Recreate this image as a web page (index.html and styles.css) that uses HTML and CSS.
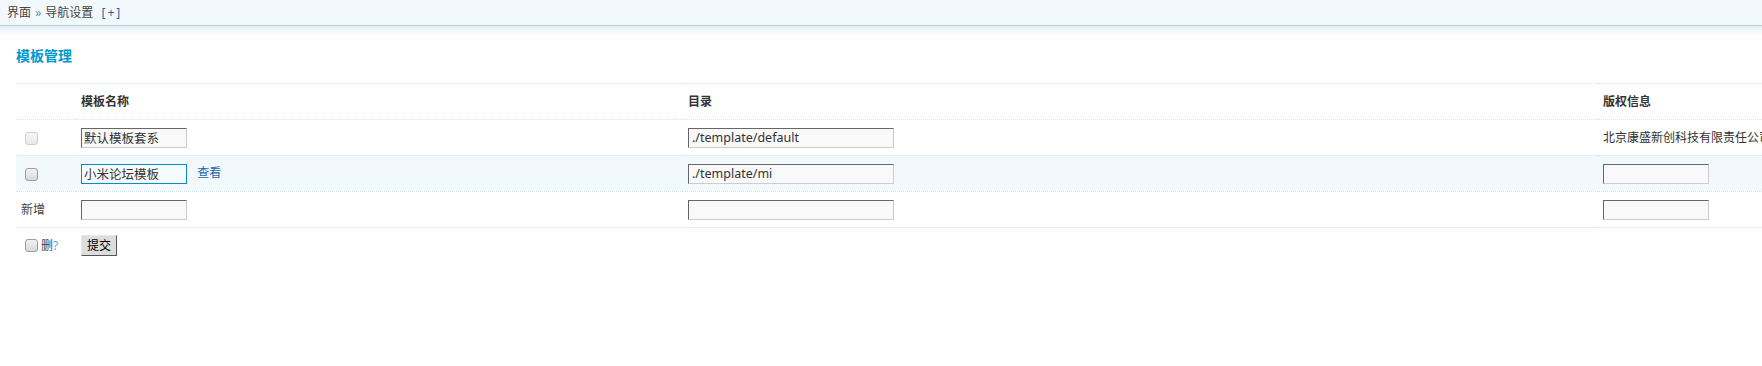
FILE: index.html
```html
<!DOCTYPE html>
<html>
<head>
<meta charset="utf-8">
<title>模板管理</title>
<link rel="stylesheet" href="styles.css">
</head>
<body>

<div id="navbar">
    界面 <span class="sep">&raquo;</span> 导航设置 <a class="addnav" href="#">[+]</a>
</div>
<div id="navshadow"></div>

<div id="main">
    <h3>模板管理</h3>

    <table class="tb">
        <colgroup>
            <col class="c-chk">
            <col class="c-name">
            <col class="c-dir">
            <col>
        </colgroup>
        <tr class="header">
            <td></td>
            <td>模板名称</td>
            <td>目录</td>
            <td>版权信息</td>
        </tr>
        <tr>
            <td><input type="checkbox" class="checkbox" disabled></td>
            <td><input type="text" class="txt" value="默认模板套系"></td>
            <td><input type="text" class="txt txt-dir" value="./template/default"></td>
            <td class="nowrap">北京康盛新创科技有限责任公司</td>
        </tr>
        <tr class="hover">
            <td><input type="checkbox" class="checkbox"></td>
            <td><input type="text" class="txt focus" value="小米论坛模板"> <a class="act" href="#">查看</a></td>
            <td><input type="text" class="txt txt-dir" value="./template/mi"></td>
            <td><input type="text" class="txt"></td>
        </tr>
        <tr>
            <td class="plain">新增</td>
            <td><input type="text" class="txt"></td>
            <td><input type="text" class="txt txt-dir"></td>
            <td><input type="text" class="txt"></td>
        </tr>
        <tr class="fixsel">
            <td><input type="checkbox" class="checkbox" id="chkall"><label for="chkall">删<span class="help">?</span></label></td>
            <td><input type="submit" class="btn" value="提交"></td>
            <td class="solid"></td>
            <td></td>
        </tr>
    </table>
</div>

</body>
</html>
```
FILE: styles.css
```css
html { overflow: hidden; }
html, body { margin: 0; padding: 0; font: normal 12px/1.5 "Noto Sans", "Noto Sans CJK SC", sans-serif; color: #333; background-color: #FFF; }
a { text-decoration: none; color: #2366A8; }

#navbar { height: 25px; line-height: 25px; padding: 0 0 0 7px; background-color: #F2F9FD; border-bottom: 1px solid #B5CFD9; color: #444; white-space: nowrap; word-spacing: 1px; }
#navbar .sep { color: #6A8CA8; }
#navbar .addnav { margin-left: 4px; color: #2366A8; letter-spacing: 2px; }
#navshadow { height: 10px; background: linear-gradient(#E4F0F6, #FFF); }

#main { padding: 0 0 0 16px; }
h3 { margin: 11px 0 18px; font-size: 14px; line-height: 18px; font-weight: bold; color: #09C; }

.tb { width: 100%; table-layout: fixed; border-collapse: separate; border-spacing: 0; }
.tb col.c-chk  { width: 60px; }
.tb col.c-name { width: 607px; }
.tb col.c-dir  { width: 915px; }
.tb td { box-sizing: border-box; height: 36px; padding: 0 0 0 5px; border-top: 1px dotted #D4E6F3; vertical-align: middle; white-space: nowrap; }
.tb .header td { font-weight: bold; color: #333; }
.tb .hover td { background-color: #F2F9FD; }
.tb .fixsel td.solid { border-top: 1px solid #DEEFFB; }
.tb td.plain { color: #444; }

.txt { box-sizing: border-box; width: 106px; height: 20px; margin: 0; padding: 0 2px; font: inherit; font-size: 12.5px; color: #333; background-color: #F9F9F9; border: 1px solid #CCC; border-top-color: #666; border-left-color: #666; vertical-align: middle; outline: none; }
.txt-dir { width: 206px; padding-left: 3px; }
.txt.focus { border-color: #0A8CCB; background-color: #F5FAFD; }
.act { margin-left: 7px; }

.checkbox { -webkit-appearance: none; appearance: none; box-sizing: border-box; width: 13px; height: 13px; margin: 0 3px 0 4px; vertical-align: middle; border: 1px solid #9C9C9C; border-radius: 3px; background: linear-gradient(#F2F2F2, #D8D8D8); }
.checkbox[disabled] { border-color: #CDCDCD; background: linear-gradient(#F8F8F8, #E8E8E8); }
label { vertical-align: middle; color: #444; }
.help { color: #6AA0D0; }

.btn { box-sizing: border-box; height: 21px; margin: 0; padding: 0 5px; font: inherit; color: #000; background-color: #DDD; border: 1px solid; border-color: #E8E8E8 #555 #555 #E8E8E8; vertical-align: middle; }
.nowrap { white-space: nowrap; }
```
